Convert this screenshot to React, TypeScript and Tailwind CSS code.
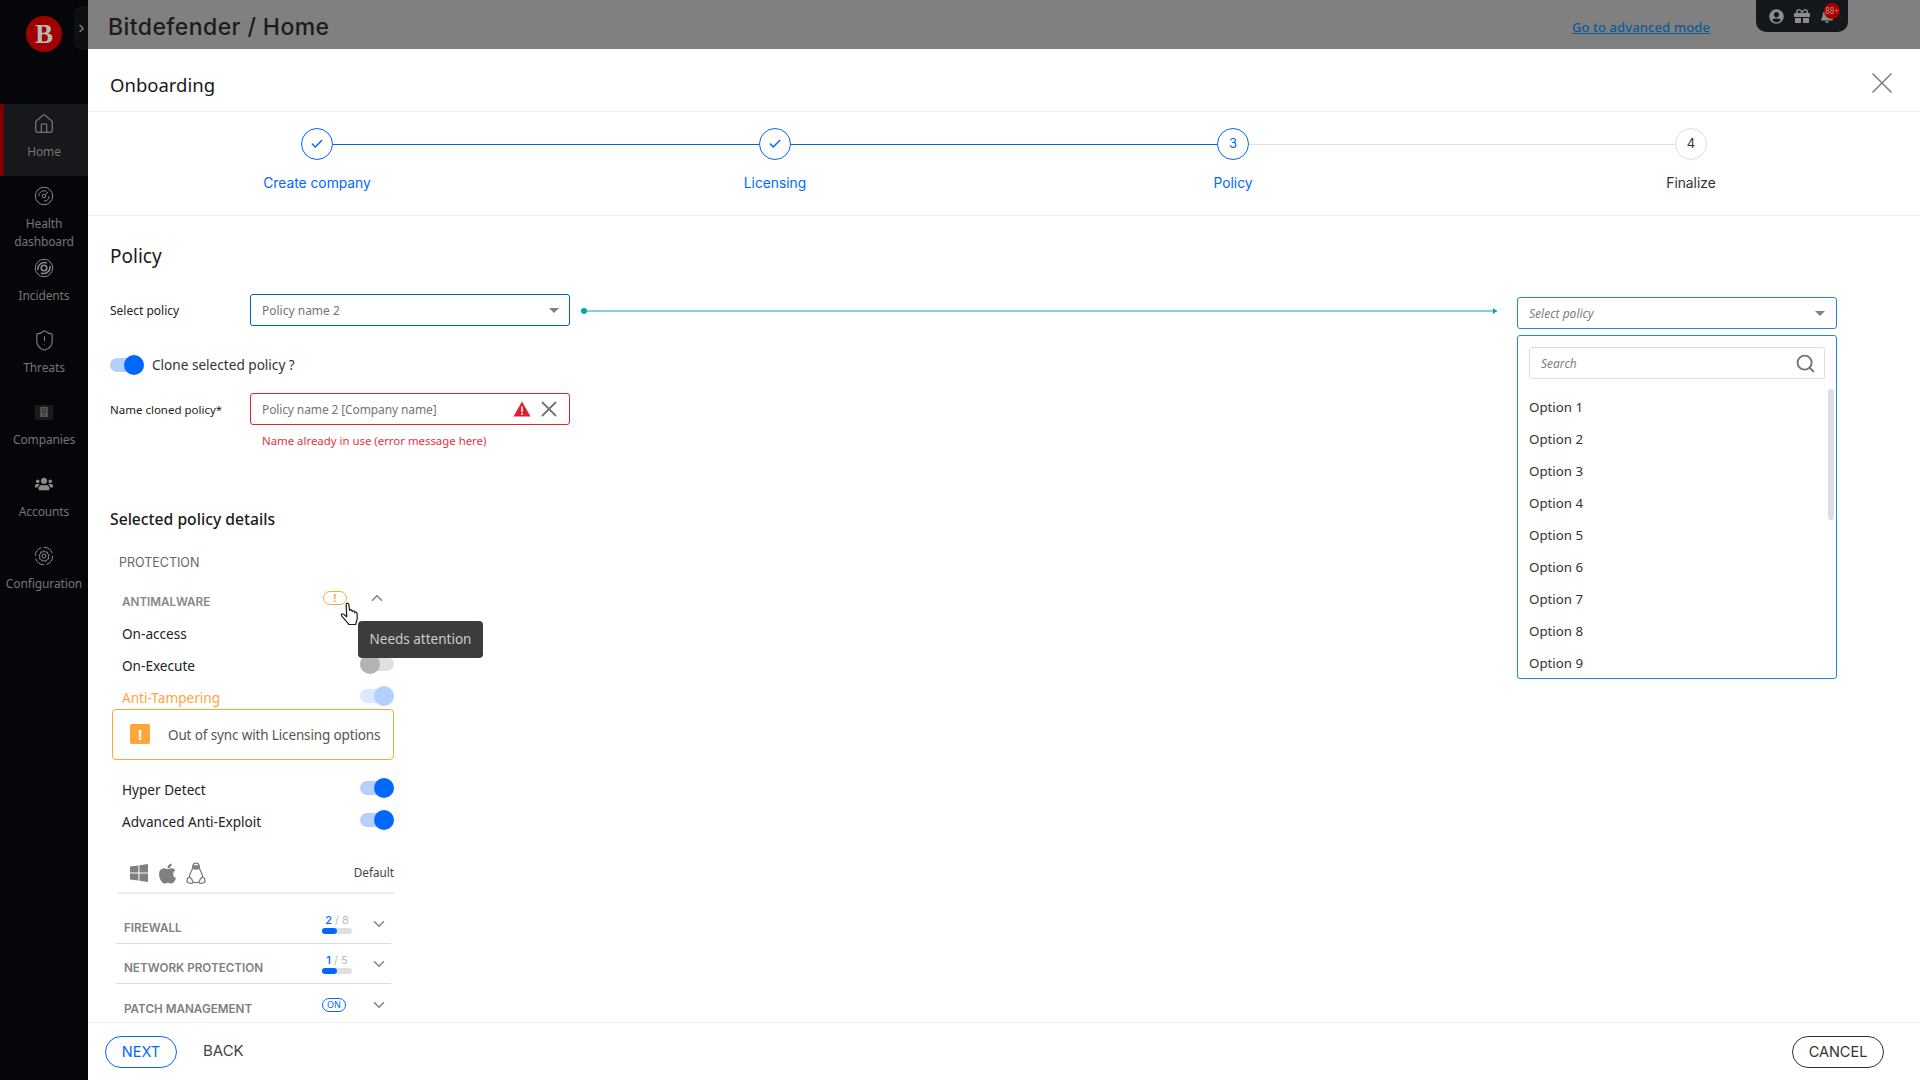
import React from "react";
import { Home, ChevronRight, ChevronDown, ChevronUp, X, Check, Search, ShieldAlert } from "lucide-react";
import { FaApple, FaUserCircle, FaGift, FaBell, FaBuilding, FaUsers } from "react-icons/fa";

const mont = "font-['Inter',sans-serif]";

function Gauge() {
  return (
    <svg width="20" height="20" viewBox="0 0 20 20" fill="none" stroke="#8a8a8a" strokeWidth="1">
      <circle cx="10" cy="10" r="8.7" />
      <path d="M4.8 10a5.2 5.2 0 0 1 7.6-4.6M15.2 10a5.2 5.2 0 0 1-5.2 5.2" />
      <circle cx="10" cy="10" r="1.8" />
      <path d="M11.2 8.8l3-3" />
    </svg>
  );
}
function Incident() {
  return (
    <svg width="20" height="20" viewBox="0 0 20 20" fill="none" stroke="#8a8a8a" strokeWidth="1">
      <circle cx="10" cy="10" r="8.7" />
      <path d="M4 12a6.5 6.5 0 0 1 9-7M16 8a6.5 6.5 0 0 1-9 7" strokeWidth="1.5" />
      <circle cx="10" cy="10" r="2.8" strokeWidth="1.6" />
    </svg>
  );
}
function Config() {
  return (
    <svg width="20" height="20" viewBox="0 0 20 20" fill="none" stroke="#8a8a8a" strokeWidth="1">
      <circle cx="10" cy="10" r="8.7" strokeDasharray="11 2.5" />
      <circle cx="10" cy="10" r="2" />
      <path d="M10 4.6l1.3 1.5 2-.2.3 2 1.7 1.1-1 1.8.6 1.9-1.9.7-.8 1.8-2.2-.6-2 .6-.8-1.8-1.9-.7.6-1.9-1-1.8 1.7-1.1.3-2 2 .2z" />
    </svg>
  );
}
function Windows() {
  return (
    <svg width="18" height="18" viewBox="0 0 18 18" fill="#808080">
      <path d="M0 2.6L8.4 1.4V8.5H0zM9.4 1.2L18 0V8.5H9.4zM0 9.5H8.4V16.6L0 15.4zM9.4 9.5H18V18L9.4 16.8z" />
    </svg>
  );
}
function Tux() {
  return (
    <svg width="20" height="23" viewBox="0 0 20 23" fill="none" stroke="#808080" strokeWidth="1.3" strokeLinejoin="round">
      <path d="M10 1.2c-2.4 0-3.3 1.8-3.3 3.8 0 2.2-.8 3.2-1.8 5-1 1.9-1.7 3.7-1.5 5.3M10 1.2c2.4 0 3.3 1.8 3.3 3.8 0 2.2.8 3.2 1.8 5 1 1.9 1.7 3.7 1.5 5.3" />
      <path d="M7 6.2c1.2 1.2 4.8 1.2 6 0" fill="#808080" />
      <path d="M6.8 3.2h6.4v3H6.8z" fill="#808080" stroke="none" />
      <path d="M1 19c0-2 1-3.6 2.4-3.6 1.4 0 2.6 2 3.4 4 .5 1.3-.7 2.4-2.4 1.9C2.8 20.900 1 20.700 1 19zM19 19c0-2-1-3.600-2.400-3.600-1.400 0-2.600 2-3.400 4-.5 1.300.7 2.400 2.400 1.900 1.600-.4 3.400-.6 3.400-2.300z" />
      <path d="M7 20.500h6" />
    </svg>
  );
}
function Hand() {
  return (
    <svg width="21" height="25" viewBox="0 0 21 25" fill="#ffffff" stroke="#1c1c1c" strokeWidth="1.2" strokeLinejoin="round">
      <path d="M6.200 2.200c0-1.500 2.400-1.500 2.600 0l.8 6.300c.2-1.300 2.200-1.200 2.400.2l.2.900c.2-1.200 2.200-1.100 2.400.3l.1.800c.4-1 2-.8 2.200.5.400 2.400.5 5 0 7-.4 1.800-1.200 3-1.200 4.300H8.800c-1-2.200-3-3.800-5.300-6.300-1.300-1.500-2.700-3.400-1.700-4.300.9-.8 2.500.6 4.900 3z" />
    </svg>
  );
}

function NavItem({ icon, label, active }: { icon: React.ReactNode; label: React.ReactNode; active?: boolean }) {
  return (
    <div className={`h-[72px] flex flex-col items-center pt-[10px] ${active ? "bg-[#16181b] border-l-4 border-[#7d0000] pr-1" : ""}`}>
      <div className="h-5 flex items-center justify-center shrink-0">{icon}</div>
      <div className="mt-[9px] text-[12px] leading-[18px] text-[#757575] text-center whitespace-nowrap tracking-[-0.01em]">{label}</div>
    </div>
  );
}

function Toggle({ faded, off }: { faded?: boolean; off?: boolean }) {
  if (off) {
    return (
      <div className="w-[34px] h-5 flex items-center shrink-0 -mt-[5px]">
        <div className="w-[34px] h-[14px] rounded-full bg-[#e0e0e0] flex items-center">
          <div className="w-5 h-5 rounded-full bg-[#b3b3b3] shrink-0" />
        </div>
      </div>
    );
  }
  return (
    <div className="w-[34px] h-5 flex items-center shrink-0 -mt-[5px]">
      <div className={`w-[34px] h-[14px] rounded-full flex items-center justify-end ${faded ? "bg-[#dbe9ff]" : "bg-[#b3d1ff]"}`}>
        <div className={`w-5 h-5 rounded-full shrink-0 ${faded ? "bg-[#b3d1ff]" : "bg-[#0068ff]"}`} />
      </div>
    </div>
  );
}

function Step({ n, label, done, active, left, right }: { n?: string; label: string; done?: boolean; active?: boolean; left?: string; right?: string }) {
  const blue = done || active;
  return (
    <div className="flex flex-col items-center">
      <div className="w-full flex items-center h-8">
        <div className={`flex-1 h-px ${left ?? ""}`} />
        <div className={`w-8 h-8 rounded-full border flex items-center justify-center text-[13px] ${mont} ${blue ? "border-[#0068ff] text-[#0068ff]" : "border-[#dddddd] text-[#333333]"}`}>
          {done ? <Check size={14} strokeWidth={2.5} color="#0068ff" /> : n}
        </div>
        <div className={`flex-1 h-px ${right ?? ""}`} />
      </div>
      <div className={`mt-[13px] text-[13.8px] leading-5 ${mont} ${blue ? "text-[#0068ff]" : "text-[#333333]"}`}>{label}</div>
    </div>
  );
}

function Section({ title, right, last }: { title: string; right: React.ReactNode; last?: boolean }) {
  return (
    <div className={`ml-[6px] w-[275px] h-10 flex items-end shrink-0 ${last ? "" : "border-b border-[#dddddd]"}`}>
      <div className={`pl-2 mb-[7px] text-[11.7px] leading-4 font-semibold text-[#808080] whitespace-nowrap ${mont}`}>{title}</div>
      <div className="ml-auto w-[30px] shrink-0 mb-[9px] flex justify-start">{right}</div>
      <ChevronDown className="ml-[18px] mr-[3px] mb-[10px] shrink-0" size={18} color="#808080" />
    </div>
  );
}

function Counter({ a, b }: { a: string; b: string }) {
  return (
    <div className="flex flex-col items-center">
      <div className={`text-[11px] leading-[12px] ${mont}`}>
        <span className="text-[#0068ff] font-medium">{a}</span>
        <span className="text-[#bbbbbb]"> / {b}</span>
      </div>
      <div className="mt-[2px] w-[30px] h-[6px] rounded-full bg-[#dfdfdf]">
        <div className="w-[15px] h-[6px] rounded-full bg-[#0068ff]" />
      </div>
    </div>
  );
}

const Row = ({ label, orange, children }: { label: string; orange?: boolean; children?: React.ReactNode }) => (
  <div className="h-8 flex items-center justify-between pl-3">
    <span className={`text-[13.6px] ${orange ? "text-[#ffa53c]" : "text-[#222222]"}`}>{label}</span>
    {children}
  </div>
);

export default function App() {
  return (
    <div className="h-screen w-full flex overflow-hidden bg-white font-['Noto_Sans',sans-serif]">
      <aside className="w-[88px] shrink-0 bg-[#04060a] flex flex-col">
        <div className="h-[104px] shrink-0 relative flex justify-center pt-4">
          <div className="w-9 h-9 rounded-full bg-[#a00000] flex items-center justify-center text-[#b8b8b8] text-[27px] leading-none font-bold font-['Liberation_Serif',serif]">B</div>
          <div className="absolute right-0 top-[6px] w-[14px] h-[44px] bg-[#0d0f12] rounded-l-lg flex items-center justify-center">
            <ChevronRight size={13} color="#8a8a8a" />
          </div>
        </div>
        <NavItem active icon={<Home size={22} color="#8a8a8a" strokeWidth={1.1} />} label="Home" />
        <NavItem icon={<Gauge />} label={<>Health<br />dashboard</>} />
        <NavItem icon={<Incident />} label="Incidents" />
        <NavItem icon={<ShieldAlert size={23} color="#8a8a8a" strokeWidth={1.1} />} label="Threats" />
        <NavItem icon={<div className="w-[18px] h-[15px] bg-[#1a1b1d] flex items-center justify-center"><FaBuilding size={10} color="#5a5a5a" /></div>} label="Companies" />
        <NavItem icon={<FaUsers size={18} color="#8a8a8a" />} label="Accounts" />
        <NavItem icon={<Config />} label="Configuration" />
      </aside>

      <main className="flex-1 min-w-0 flex flex-col">
        <header className="h-[49px] shrink-0 bg-[#808080] flex items-start pl-5 relative">
          <h1 className={`mt-[13px] text-[23px] leading-7 font-medium text-[#1c1c1c] tracking-[0.018em] ${mont}`}>Bitdefender / Home</h1>
          <a className="ml-auto mt-[18px] text-[13.2px] leading-[18px] font-medium underline text-[#0f5a96]">Go to advanced mode</a>
          <div className="ml-[46px] mr-[72px] w-[92px] h-[32px] bg-[#14181c] rounded-b-[10px] flex items-center pl-[13px] gap-[10px] relative">
            <FaUserCircle size={15} color="#8c8c8c" />
            <FaGift size={16} color="#8c8c8c" />
            <FaBell size={14} color="#8c8c8c" />
            <span className="absolute left-[68px] top-[3px] w-[16px] h-[16px] rounded-full bg-[#a60000] text-[8px] leading-[16px] text-center text-[#d88]">88+</span>
          </div>
        </header>

        <div className="h-[63px] shrink-0 border-b border-[#eeeeee] flex items-center justify-between pl-[22px] pr-[20px] pt-[10px]">
          <h2 className="text-[18.5px] text-[#1a1a1a]">Onboarding</h2>
          <X className="-mt-1" size={36} color="#808080" strokeWidth={1.1} />
        </div>

        <div className="h-[104px] shrink-0 border-b border-[#eeeeee] grid grid-cols-4 pt-4">
          <Step done label="Create company" right="bg-[#0068c8]" />
          <Step done label="Licensing" left="bg-[#0068c8]" right="bg-[#0068c8]" />
          <Step active n="3" label="Policy" left="bg-[#0068c8]" right="bg-[#e0e0e0]" />
          <Step n="4" label="Finalize" left="bg-[#e0e0e0]" />
        </div>

        <div className="flex-1 min-h-0 overflow-hidden pl-[22px] pr-[83px] flex items-start">
          <div className="w-[460px] shrink-0 pt-[26px]">
            <div className="text-[19px] leading-7 text-[#1a1a1a]">Policy</div>
            <div className="mt-[24px] flex items-center h-8">
              <div className="w-[140px] pt-px text-[12px] text-[#222222]">Select policy</div>
              <div className="w-[320px] h-8 border border-[#0062c4] rounded-[3px] flex items-center justify-between pl-[11px] pr-[10px]">
                <span className="pt-px text-[12px] text-[#757575]">Policy name 2</span>
                <span className="w-0 h-0 border-x-[5px] border-x-transparent border-t-[5px] border-t-[#808080]" />
              </div>
            </div>
            <div className="mt-[24px] h-[30px] flex items-center gap-2">
              <div className="mt-[5px]"><Toggle /></div>
              <span className="text-[13.6px] text-[#333333]">Clone selected policy ?</span>
            </div>
            <div className="mt-[13px] flex items-center h-8">
              <div className="w-[140px] pt-px text-[11.5px] text-[#222222]">Name cloned policy*</div>
              <div className="w-[320px] h-8 border border-[#e0242f] rounded-[3px] flex items-center pl-[11px] pr-[7px]">
                <span className="pt-px text-[12px] text-[#757575] tracking-[-0.01em]">Policy name 2 [Company name]</span>
                <svg className="ml-auto" width="18" height="16" viewBox="0 0 18 16">
                  <path d="M9 0.5L17.5 15.5H0.5z" fill="#dc2030" />
                  <rect x="8.2" y="5.5" width="1.6" height="5.500" fill="#fff" />
                  <rect x="8.2" y="12" width="1.6" height="1.7" fill="#fff" />
                </svg>
                <X className="ml-[5px]" size={26} color="#757575" strokeWidth={1.7} />
              </div>
            </div>
            <div className="mt-2 pl-[152px] text-[11.4px] leading-4 text-[#e8303f]">Name already in use (error message here)</div>

            <div className="mt-[58px] text-[15.7px] leading-6 font-medium text-[#1a1a1a]">Selected policy details</div>
            <div className={`mt-[24px] pl-[9px] text-[12.5px] leading-4 text-[#666666] ${mont}`}>PROTECTION</div>

            <div className="w-[284px] relative">
              <div className="mt-[17px] h-5 flex items-center pl-3">
                <span className={`mt-[10px] text-[11.7px] font-semibold text-[#888888] ${mont}`}>ANTIMALWARE</span>
                <span className="ml-auto mr-[21px] w-6 h-[14px] -mt-[1px] rounded-full border border-[#ffa53c] text-[#ffa53c] text-[10px] leading-[12px] text-center font-bold">!</span>
                <ChevronUp className="mr-[8px] -mt-[1px]" size={18} color="#808080" />
              </div>
              <div className="mt-[10px]">
                <Row label="On-access"><Toggle /></Row>
                <Row label="On-Execute"><Toggle off /></Row>
                <Row label="Anti-Tampering" orange><Toggle faded /></Row>
              </div>
              <div className="-mt-[5px] ml-[2px] h-[51px] border border-[#ffa53c] rounded-[4px] flex items-center pl-[17px]">
                <div className="w-5 h-5 -mt-[2px] rounded-[2px] bg-[#ffa53c] text-white text-[15px] leading-5 text-center font-bold">!</div>
                <span className="ml-[18px] pt-px text-[13.5px] text-[#555555] whitespace-nowrap tracking-[-0.01em]">Out of sync with Licensing options</span>
              </div>
              <div className="mt-[14px]">
                <Row label="Hyper Detect"><Toggle /></Row>
                <Row label="Advanced Anti-Exploit"><Toggle /></Row>
              </div>
              <div className="mt-[24px] ml-[8px] h-[32px] border-b-2 border-[#eeeeee] flex items-start pl-[12px]">
                <div className="mt-[2px]"><Windows /></div>
                <FaApple size={23} color="#808080" className="ml-[8px]" />
                <div className="ml-[7px]"><Tux /></div>
                <span className="ml-auto mt-[2px] text-[11.7px] text-[#444444]">Default</span>
              </div>
              <div className="mt-[10px] flex flex-col">
                <Section title="FIREWALL" right={<Counter a="2" b="8" />} />
                <Section title="NETWORK PROTECTION" right={<Counter a="1" b="5" />} />
                <Section last title="PATCH MANAGEMENT" right={<div className="w-6 h-[14px] rounded-full border border-[#0068ff] text-[#0068ff] text-[9px] leading-[12px] text-center mb-[3px]">ON</div>} />
              </div>
              <div className="absolute left-[248px] top-[33px] w-[125px] h-[37px] rounded-[4px] bg-[#3c3c3c] text-[#cccccc] text-[13.5px] leading-[37px] text-center whitespace-nowrap">Needs attention</div>
              <div className="absolute left-[230px] top-[14px]"><Hand /></div>
            </div>
          </div>

          <div className="flex-1 min-w-0 ml-[11px] mr-[20px] mt-[94px] h-[2px] bg-[#7cd8d6] relative">
            <div className="absolute left-0 -top-[2px] w-[6px] h-[6px] rounded-full bg-[#00a7a6]" />
            <div className="absolute right-0 -top-[2px] w-0 h-0 border-y-[3px] border-y-transparent border-l-[4px] border-l-[#00a7a6]" />
          </div>

          <div className="w-[320px] shrink-0 pt-[81px]">
            <div className="h-8 border border-[#2a85e0] rounded-[3px] flex items-center justify-between pl-[11px] pr-[11px]">
              <span className="pt-px text-[12px] italic text-[#808080]">Select policy</span>
              <span className="w-0 h-0 border-x-[5px] border-x-transparent border-t-[5px] border-t-[#808080]" />
            </div>
            <div className="mt-[6px] h-[344px] overflow-hidden border border-[#2a85e0] rounded-[3px] px-[11px] pt-[11px] relative">
              <div className="h-[32px] border border-[#dddddd] rounded-[3px] flex items-center justify-between pl-[11px] pr-[8px]">
                <span className="pt-px text-[12px] italic text-[#808080]">Search</span>
                <Search size={21} color="#757575" strokeWidth={2.2} />
              </div>
              <div className="mt-[13px] flex flex-col">
                {[1, 2, 3, 4, 5, 6, 7, 8, 9].map((i) => (
                  <div key={i} className="h-8 shrink-0 flex items-center text-[13.3px] text-[#333333]">Option {i}</div>
                ))}
              </div>
              <div className="absolute right-[2px] top-[53px] w-[6px] h-[131px] rounded-full bg-[#dfdfdf]" />
            </div>
          </div>
        </div>

        <footer className="h-[58px] shrink-0 border-t border-[#eeeeee] bg-white flex items-center pl-[17px] pr-9">
          <button className={`w-[72px] h-8 rounded-full border border-[#0068ff] text-[#0068ff] text-[14.500px] ${mont}`}>NEXT</button>
          <button className={`ml-[26px] text-[15px] text-[#444444] ${mont}`}>BACK</button>
          <button className={`ml-auto w-[92px] h-8 rounded-full border border-[#333333] text-[#333333] text-[14.500px] ${mont}`}>CANCEL</button>
        </footer>
      </main>
    </div>
  );
}
